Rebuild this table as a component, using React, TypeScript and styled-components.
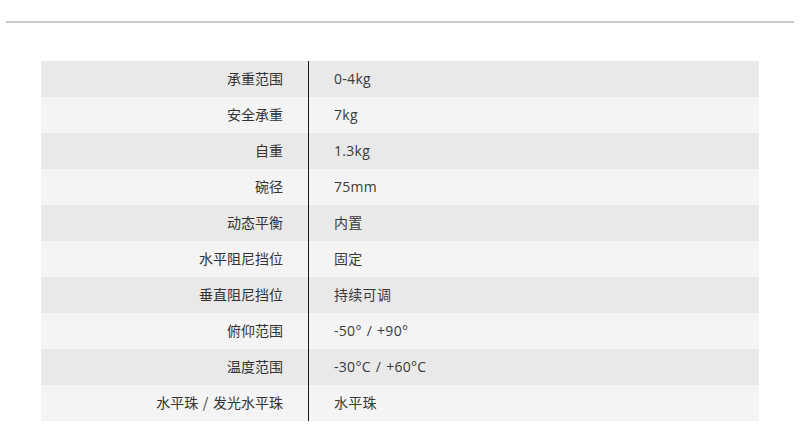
import React from "react";
import styled, { createGlobalStyle } from "styled-components";

const Global = createGlobalStyle`
  html, body { margin: 0; padding: 0; background: #fff; }
  body { font-family: "Open Sans", "Noto Sans CJK SC", sans-serif; }
`;

const Page = styled.div`
  width: 800px;
  height: 437px;
  display: flex;
  flex-direction: column;
  padding-top: 21px;
  box-sizing: border-box;
`;

const Rule = styled.hr`
  margin: 0 6px;
  border: none;
  height: 2px;
  background: #cacaca;
`;

const Table = styled.div`
  margin: 38px 41px 0 41px;
  display: flex;
  flex-direction: column;
`;

const Row = styled.div<{ $alt: boolean }>`
  display: grid;
  grid-template-columns: 267px 1px 1fr;
  height: 36px;
  align-items: center;
  background: ${(p) => (p.$alt ? "#f4f4f4" : "#e9e9e9")};
  font-size: 14px;
  color: #333;
`;

const Label = styled.div`
  text-align: right;
  padding-right: 25px;
  font-family: "Noto Sans CJK SC", sans-serif;
  white-space: nowrap;
  word-spacing: 1.5px;
  margin-top: -2px;
`;

const Divider = styled.div`
  align-self: stretch;
  background: #1a1a1a;
`;

const Value = styled.div`
  padding-left: 25px;
  font-family: "Open Sans", "Noto Sans CJK SC", sans-serif;
  white-space: nowrap;
  margin-top: -2px;
  letter-spacing: 0.3px;
  word-spacing: 1px;
  color: #3a3a3a;
`;

const rows: [string, string][] = [
  ["承重范围", "0-4kg"],
  ["安全承重", "7kg"],
  ["自重", "1.3kg"],
  ["碗径", "75mm"],
  ["动态平衡", "内置"],
  ["水平阻尼挡位", "固定"],
  ["垂直阻尼挡位", "持续可调"],
  ["俯仰范围", "-50° / +90°"],
  ["温度范围", "-30°C / +60°C"],
  ["水平珠 / 发光水平珠", "水平珠"],
];

export default function App() {
  return (
    <>
      <Global />
      <Page>
        <Rule />
        <Table>
          {rows.map(([k, v], i) => (
            <Row key={k} $alt={i % 2 === 1}>
              <Label>{k}</Label>
              <Divider />
              <Value>{v}</Value>
            </Row>
          ))}
        </Table>
      </Page>
    </>
  );
}
